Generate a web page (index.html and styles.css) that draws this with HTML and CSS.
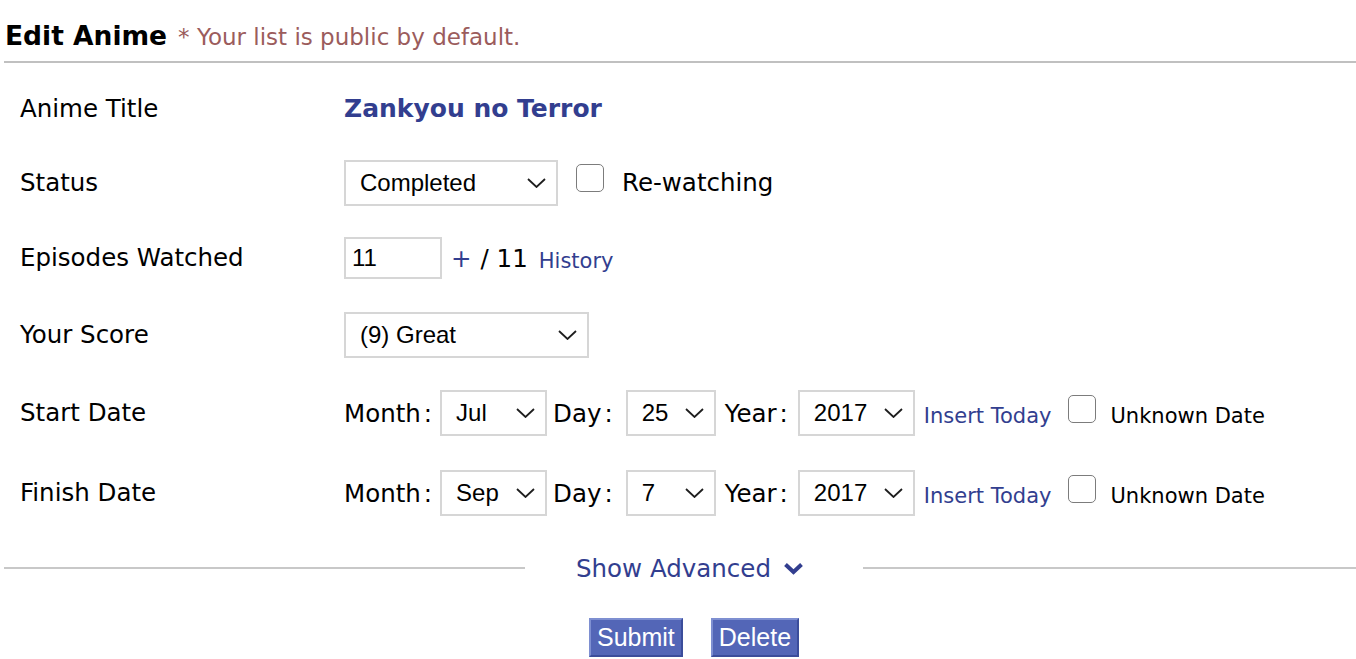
FILE: index.html
```html
<!DOCTYPE html>
<html>
<head>
<meta charset="utf-8">
<title>Edit Anime</title>
<link rel="stylesheet" href="styles.css">
</head>
<body>
<div class="page">
  <div class="header">
    <h1 class="title">Edit Anime</h1>
    <span class="note">* Your list is public by default.</span>
  </div>

  <div class="form">
    <div class="label">Anime Title</div>
    <div class="field"><a class="anime-link" href="#">Zankyou no Terror</a></div>

    <div class="label">Status</div>
    <div class="field">
      <div class="select sel-status"><span>Completed</span><svg class="chev" viewBox="0 0 19 10"><path d="M1 1 L9.5 9 L18 1"/></svg></div>
      <span class="checkbox cb-rewatch"></span>
      <span class="rewatch">Re-watching</span>
    </div>

    <div class="label">Episodes Watched</div>
    <div class="field">
      <div class="textbox">11</div>
      <a class="plus" href="#">+</a>
      <span class="total">/ 11</span>
      <a class="small-link history" href="#">History</a>
    </div>

    <div class="label">Your Score</div>
    <div class="field">
      <div class="select sel-score"><span>(9) Great</span><svg class="chev" viewBox="0 0 19 10"><path d="M1 1 L9.5 9 L18 1"/></svg></div>
    </div>

    <div class="label">Start Date</div>
    <div class="field">
      <span class="dlabel">Month<span class="colon">:</span></span>
      <div class="select sel-month"><span>Jul</span><svg class="chev" viewBox="0 0 19 10"><path d="M1 1 L9.5 9 L18 1"/></svg></div>
      <span class="dlabel dl-day">Day<span class="colon">:</span></span>
      <div class="select sel-day"><span>25</span><svg class="chev" viewBox="0 0 19 10"><path d="M1 1 L9.5 9 L18 1"/></svg></div>
      <span class="dlabel dl-year">Year<span class="colon">:</span></span>
      <div class="select sel-year"><span>2017</span><svg class="chev" viewBox="0 0 19 10"><path d="M1 1 L9.5 9 L18 1"/></svg></div>
      <a class="small-link today" href="#">Insert Today</a>
      <span class="checkbox cb-unknown"></span>
      <span class="unknown">Unknown Date</span>
    </div>

    <div class="label">Finish Date</div>
    <div class="field">
      <span class="dlabel">Month<span class="colon">:</span></span>
      <div class="select sel-month"><span>Sep</span><svg class="chev" viewBox="0 0 19 10"><path d="M1 1 L9.5 9 L18 1"/></svg></div>
      <span class="dlabel dl-day">Day<span class="colon">:</span></span>
      <div class="select sel-day"><span>7</span><svg class="chev" viewBox="0 0 19 10"><path d="M1 1 L9.5 9 L18 1"/></svg></div>
      <span class="dlabel dl-year">Year<span class="colon">:</span></span>
      <div class="select sel-year"><span>2017</span><svg class="chev" viewBox="0 0 19 10"><path d="M1 1 L9.5 9 L18 1"/></svg></div>
      <a class="small-link today" href="#">Insert Today</a>
      <span class="checkbox cb-unknown"></span>
      <span class="unknown">Unknown Date</span>
    </div>
  </div>

  <div class="advanced">
    <span class="rule"></span>
    <a class="adv-link" href="#">Show Advanced <svg class="adv-chev" viewBox="0 0 21 14"><path d="M2.5 3.5 L10.5 11 L18.5 3.5"/></svg></a>
    <span class="rule"></span>
  </div>

  <div class="actions">
    <button class="btn">Submit</button>
    <button class="btn">Delete</button>
  </div>
</div>
</body>
</html>
```

FILE: styles.css
```css
html, body {
  margin: 0;
  padding: 0;
  background: #ffffff;
  overflow: hidden;
}

body {
  font-family: "DejaVu Sans", Verdana, sans-serif;
  color: #000000;
}

a {
  text-decoration: none;
  color: #323e8f;
}

.page {
  width: 1380px;
  padding-left: 4px;
}

.header {
  display: flex;
  align-items: baseline;
  padding-top: 20px;
  padding-bottom: 9px;
  border-bottom: 2px solid #c0c0c0;
}

.title {
  margin: 0 0 0 1px;
  font-size: 26.5px;
  font-weight: bold;
  line-height: 32px;
  color: #000;
}

.note {
  margin-left: 11px;
  font-size: 23px;
  color: #9b5c5c;
}

.form {
  display: grid;
  grid-template-columns: 324px 1fr;
  grid-template-rows: 73px 75px 76px 77px 80px 80px;
  align-items: center;
  margin-top: 9px;
  padding-left: 16px;
}

.label {
  font-size: 24.5px;
  line-height: 30px;
}

.field {
  display: flex;
  align-items: center;
  font-size: 24.5px;
}

.anime-link {
  font-weight: bold;
  font-size: 25px;
}

.select {
  box-sizing: border-box;
  display: flex;
  align-items: center;
  justify-content: space-between;
  height: 46px;
  border: 2px solid #d6d6d6;
  padding: 0 10px 0 14px;
  font-family: "Liberation Sans", Arial, sans-serif;
  font-size: 24px;
  background: #fff;
}

.chev {
  width: 19px;
  height: 10px;
  fill: none;
  stroke: #1e1e1e;
  stroke-width: 1.8;
}

.sel-status { width: 214px; }
.sel-score { width: 245px; }
.sel-month { width: 107px; margin-left: 8px; }
.sel-day { width: 90px; margin-left: 13px; }
.sel-year { width: 117px; margin-left: 10px; }

.colon { margin-left: 3px; }

.checkbox {
  box-sizing: border-box;
  display: inline-block;
  width: 28px;
  height: 28px;
  margin-bottom: 9px;
  border: 1px solid #7c7c7c;
  border-radius: 5px;
  background: #fff;
}

.cb-rewatch { margin-left: 18px; }
.rewatch { margin-left: 18px; }

.textbox {
  box-sizing: border-box;
  width: 98px;
  height: 42px;
  border: 2px solid #d6d6d6;
  padding-left: 6px;
  display: flex;
  align-items: center;
  font-family: "Liberation Sans", Arial, sans-serif;
  font-size: 24px;
}

.plus { margin-left: 9px; }
.total { margin-left: 9px; }

.small-link { font-size: 21px; }
.history { margin-left: 11px; padding-top: 6px; }

.dl-day { margin-left: 6px; }
.dl-year { margin-left: 9px; }

.today { margin-left: 9px; padding-top: 6px; }
.cb-unknown { margin-left: 16px; }
.unknown { margin-left: 15px; padding-top: 6px; font-size: 21px; }

.advanced {
  display: flex;
  align-items: center;
  height: 40px;
  margin-top: 15px;
}

.rule {
  flex: 1;
  height: 2px;
  background: #c8c8c8;
}

.adv-link {
  box-sizing: border-box;
  width: 338px;
  padding-right: 8px;
  display: flex;
  align-items: center;
  justify-content: center;
  font-size: 24.5px;
}

.adv-chev {
  width: 21px;
  height: 14px;
  margin-left: 12px;
  fill: none;
  stroke: #323e8f;
  stroke-width: 4;
}

.actions {
  display: flex;
  justify-content: center;
  gap: 28px;
  margin-top: 30px;
}

.btn {
  box-sizing: border-box;
  height: 39px;
  padding: 0 6px;
  border: 2px solid;
  border-color: #7e8fd1 #3b4d9b #3b4d9b #7e8fd1;
  background: #5366b7;
  color: #fff;
  font-family: "Liberation Sans", Arial, sans-serif;
  font-size: 25px;
  line-height: 33px;
}
```
